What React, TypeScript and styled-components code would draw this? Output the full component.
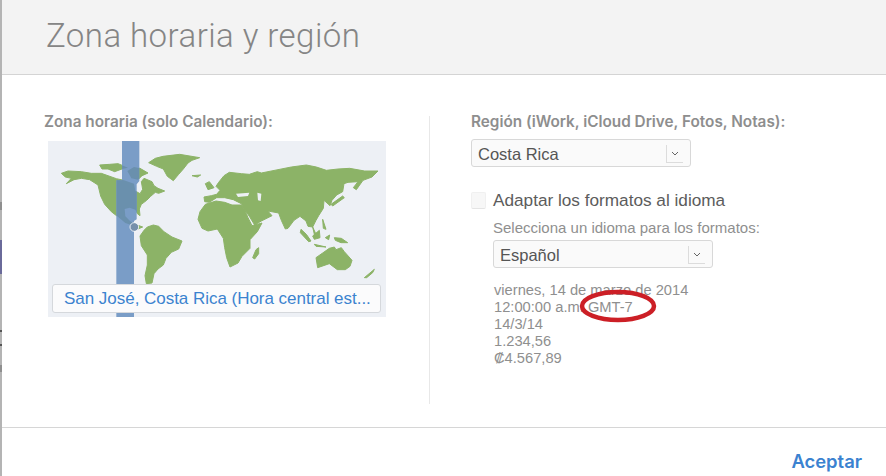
import { createGlobalStyle, styled } from "styled-components";

const GlobalStyle = createGlobalStyle`
  html, body {
    margin: 0;
    padding: 0;
    background: #fff;
  }
`;

const Dialog = styled.div`
  width: 886px;
  height: 476px;
  box-sizing: border-box;
  overflow: hidden;
  padding-left: 2px;
  background-color: #fff;
  background-image: linear-gradient(
    to bottom,
    #b4b4b4 0 202px,
    #8f8f8f 202px 210px,
    #b4b4b4 210px 240px,
    #6a6a9a 240px 274px,
    #b4b4b4 274px 330px,
    #555 330px 332px,
    #b4b4b4 332px 344px,
    #555 344px 346px,
    #b4b4b4 346px 365px,
    #8f8f8f 365px 372px,
    #b4b4b4 372px
  );
  background-repeat: no-repeat;
  background-size: 2px 100%;
  display: flex;
  flex-direction: column;
  font-family: "Inter", "Liberation Sans", sans-serif;
`;

const Header = styled.div`
  height: 75px;
  flex: none;
  box-sizing: border-box;
  background: #f3f3f3;
  border-bottom: 1px solid #d4d4d4;
  padding: 17px 0 0 44px;
`;

const Title = styled.h1`
  margin: 0;
  font-family: "Roboto", "Liberation Sans", sans-serif;
  font-weight: 300;
  font-size: 33px;
  line-height: 38px;
  letter-spacing: 0.45px;
  color: #858585;
`;

const Body = styled.div`
  height: 353px;
  flex: none;
  box-sizing: border-box;
  border-bottom: 1px solid #d6d6d6;
  display: flex;
  padding-top: 38px;
`;

const LeftColumn = styled.div`
  width: 427px;
  flex: none;
  box-sizing: border-box;
  padding-left: 42px;
`;

const Divider = styled.div`
  width: 1px;
  height: 288px;
  margin-top: 3px;
  flex: none;
  background: #e8e8e8;
`;

const RightColumn = styled.div`
  padding-left: 41px;
  flex: 1;
`;

const SectionLabel = styled.div`
  font-size: 15.3px;
  line-height: 17px;
  font-weight: 600;
  color: #8e8e8e;
  white-space: nowrap;
`;

const MapBox = styled.div`
  position: relative;
  margin: 11px 0 0 4px;
  width: 338px;
  height: 176px;
  background: #edf0f5;
  overflow: hidden;
`;

const MapDrawing = styled.svg`
  display: block;
  width: 338px;
  height: 176px;
`;

const CityBar = styled.div`
  position: absolute;
  left: 4px;
  top: 143px;
  width: 329px;
  height: 29px;
  box-sizing: border-box;
  background: #fbfbfc;
  border: 1px solid #d5d8dc;
  border-radius: 3px;
  padding-left: 11px;
  font-family: "Liberation Sans", sans-serif;
  font-size: 17px;
  line-height: 27px;
  letter-spacing: -0.03px;
  color: #3c83cf;
  white-space: nowrap;
`;

const SelectBox = styled.div<{ $width: number }>`
  width: ${(p) => p.$width}px;
  height: 28px;
  box-sizing: border-box;
  display: flex;
  align-items: center;
  justify-content: space-between;
  background: #fafafa;
  border: 1px solid #d8d8d8;
  border-radius: 3px;
  font-family: "Liberation Sans", sans-serif;
  font-size: 16.5px;
  color: #555;
`;

const SelectText = styled.span`
  padding: 3px 0 0 6px;
`;

const SelectArrow = styled.span`
  width: 17px;
  height: 18px;
  margin: 1px 7px 0 0;
  box-sizing: border-box;
  border-left: 1px solid #dcdcdc;
  border-bottom: 1px solid #dcdcdc;
  display: flex;
  align-items: center;
  justify-content: center;
`;

const RegionSelect = styled.div`
  margin-top: 9px;
`;

const CheckRow = styled.div`
  margin-top: 23px;
  height: 20px;
  display: flex;
  align-items: center;
  gap: 7px;
`;

const CheckBox = styled.span`
  width: 15px;
  height: 17px;
  flex: none;
  box-sizing: border-box;
  background: #f7f7f7;
  border: 1px solid #f0f0f0;
  border-bottom-color: #e4e4e4;
  border-radius: 2px;
`;

const CheckLabel = styled.span`
  font-family: "Liberation Sans", sans-serif;
  font-size: 17.2px;
  line-height: 20px;
  color: #5c5c5c;
`;

const FormatBlock = styled.div`
  margin: 9px 0 0 22px;
`;

const FormatHint = styled.div`
  font-family: "Liberation Sans", sans-serif;
  font-size: 15px;
  line-height: 17px;
  color: #8f8f8f;
  margin-bottom: 4px;
`;

const Samples = styled.div`
  position: relative;
  margin-top: 14px;
  padding-left: 1px;
  font-family: "Liberation Sans", sans-serif;
  font-size: 14.7px;
  line-height: 17px;
  color: #8f8f8f;
`;

const SampleLine = styled.div`
  white-space: nowrap;
`;

const RedCircle = styled.svg`
  position: absolute;
  left: 86px;
  top: 7px;
  width: 78px;
  height: 35px;
`;

const Footer = styled.div`
  flex: 1;
  display: flex;
  justify-content: flex-end;
  align-items: center;
  padding: 18px 24px 0 0;
`;

const AcceptButton = styled.button`
  border: none;
  background: none;
  padding: 0;
  font-family: "Inter", "Liberation Sans", sans-serif;
  font-size: 18.4px;
  font-weight: 600;
  color: #3b82d0;
`;

const land = [
  // north america
  "M40 97L60 90L100 92L130 97L160 97L205 113L228 118L258 128L262 150L276 158L284 145L280 122L288 112L312 122L318 134L330 142L350 150L332 157L322 154L308 166L296 178L280 190L274 204L276 224L268 218L262 206L245 200L230 204L232 226L246 240L262 250L284 258L270 264L250 252L232 246L208 226L190 212L170 190L158 165L150 132L125 116L100 112L78 116L55 128L70 112L52 108Z",
  // arctic islands
  "M155 72L185 70L210 68L240 80L222 84L200 92L180 84L162 84ZM238 90L258 78L276 82L300 96L282 104L270 116L250 112Z",
  // greenland, iceland
  "M302 65L322 52L345 46L395 40L455 50L432 58L420 66L406 84L392 100L376 119L358 106L346 84L326 76ZM432 104L458 102L448 108Z",
  // south america
  "M276 285L288 268L298 258L316 252L332 256L348 272L372 288L402 300L392 324L370 334L354 352L346 372L330 384L318 398L312 426L295 428L291 404L298 372L298 342L280 314Z",
  // africa
  "M450 235L456 212L472 190L504 180L530 184L552 192L580 192L590 206L600 230L612 254L642 246L628 272L606 296L606 322L582 346L570 366L546 378L536 350L530 320L526 292L508 264L480 270L462 262Z",
  // madagascar
  "M614 350L624 326L632 320L632 338L620 354Z",
  // eurasia
  "M468 168L490 164L506 160L516 148L504 136L512 124L528 104L544 94L580 98L604 100L628 92L640 96L690 86L730 78L775 72L805 78L835 88L870 84L905 82L950 90L990 90L972 108L945 118L925 146L916 140L930 122L900 124L888 128L884 152L866 162L852 178L846 194L828 178L826 202L812 224L804 238L794 258L780 256L774 240L756 226L738 238L720 262L712 264L700 238L692 216L660 210L654 204L672 224L640 240L620 252L604 226L590 206L580 188L556 176L530 170L506 170L484 184L470 182Z",
  // uk, japan
  "M472 128L484 122L498 140L480 146ZM849 190L884 165L889 170L854 195Z",
  // malaysia, sumatra, borneo, philippines, new guinea, java
  "M794 258L806 284L800 284ZM759 265L775 280L789 300L782 302L757 275ZM794 285L814 268L816 290L799 295ZM824 235L834 265L826 262ZM859 290L880 292L899 305L879 305L862 298ZM799 310L834 318L804 316ZM832 290L845 282L842 296Z",
  // australia
  "M804 350L824 336L844 322L859 318L864 326L880 320L889 332L912 358L906 376L892 386L868 386L844 368L809 380Z",
  // new zealand
  "M949 410L979 385L974 395L956 410Z",
];

const landPath = land.join("");

const bandPath = "M222 0H274V120L266 130V235L258 240V528H205V118H222Z";

const water = "M628 155L640 158L638 180L630 178ZM564 158L604 155L600 165L570 168ZM510 172L560 182L540 178Z";

const chevron = (
  <svg width="8" height="5" viewBox="0 0 8 5">
    <path d="M1 1L4 4L7 1" fill="none" stroke="#666" />
  </svg>
);

const App = () => (
  <>
    <GlobalStyle />
    <Dialog>
      <Header>
        <Title>Zona horaria y región</Title>
      </Header>
      <Body>
        <LeftColumn>
          <SectionLabel>Zona horaria (solo Calendario):</SectionLabel>
          <MapBox>
            <MapDrawing viewBox="0 0 1014 528">
              <defs>
                <clipPath id="band">
                  <path d={bandPath} />
                </clipPath>
              </defs>
              <path d={landPath} fill="#8cb367" stroke="#8cb367" strokeWidth="3" strokeLinejoin="round" />
              <path d={water} fill="#edf0f5" />
              <path d={bandPath} fill="#7a9dc7" />
              <path d={landPath} fill="#6a90ad" clipPath="url(#band)" />
              <circle cx="259" cy="258" r="13" fill="#7690ab" stroke="#fff" strokeWidth="2.5" />
            </MapDrawing>
            <CityBar>San José, Costa Rica (Hora central est...</CityBar>
          </MapBox>
        </LeftColumn>
        <Divider />
        <RightColumn>
          <SectionLabel>Región (iWork, iCloud Drive, Fotos, Notas):</SectionLabel>
          <RegionSelect>
            <SelectBox $width={220}>
              <SelectText>Costa Rica</SelectText>
              <SelectArrow>{chevron}</SelectArrow>
            </SelectBox>
          </RegionSelect>
          <CheckRow>
            <CheckBox />
            <CheckLabel>Adaptar los formatos al idioma</CheckLabel>
          </CheckRow>
          <FormatBlock>
            <FormatHint>Selecciona un idioma para los formatos:</FormatHint>
            <SelectBox $width={220}>
              <SelectText>Español</SelectText>
              <SelectArrow>{chevron}</SelectArrow>
            </SelectBox>
            <Samples>
              <SampleLine>viernes, 14 de marzo de 2014</SampleLine>
              <SampleLine>12:00:00 a.m. GMT-7</SampleLine>
              <SampleLine>14/3/14</SampleLine>
              <SampleLine>1.234,56</SampleLine>
              <SampleLine>₡4.567,89</SampleLine>
              <RedCircle viewBox="0 0 78 35">
                <ellipse cx="39" cy="17" rx="36" ry="14" fill="none" stroke="#cc1f26" strokeWidth="4.5" />
              </RedCircle>
            </Samples>
          </FormatBlock>
        </RightColumn>
      </Body>
      <Footer>
        <AcceptButton>Aceptar</AcceptButton>
      </Footer>
    </Dialog>
  </>
);

export default App;
